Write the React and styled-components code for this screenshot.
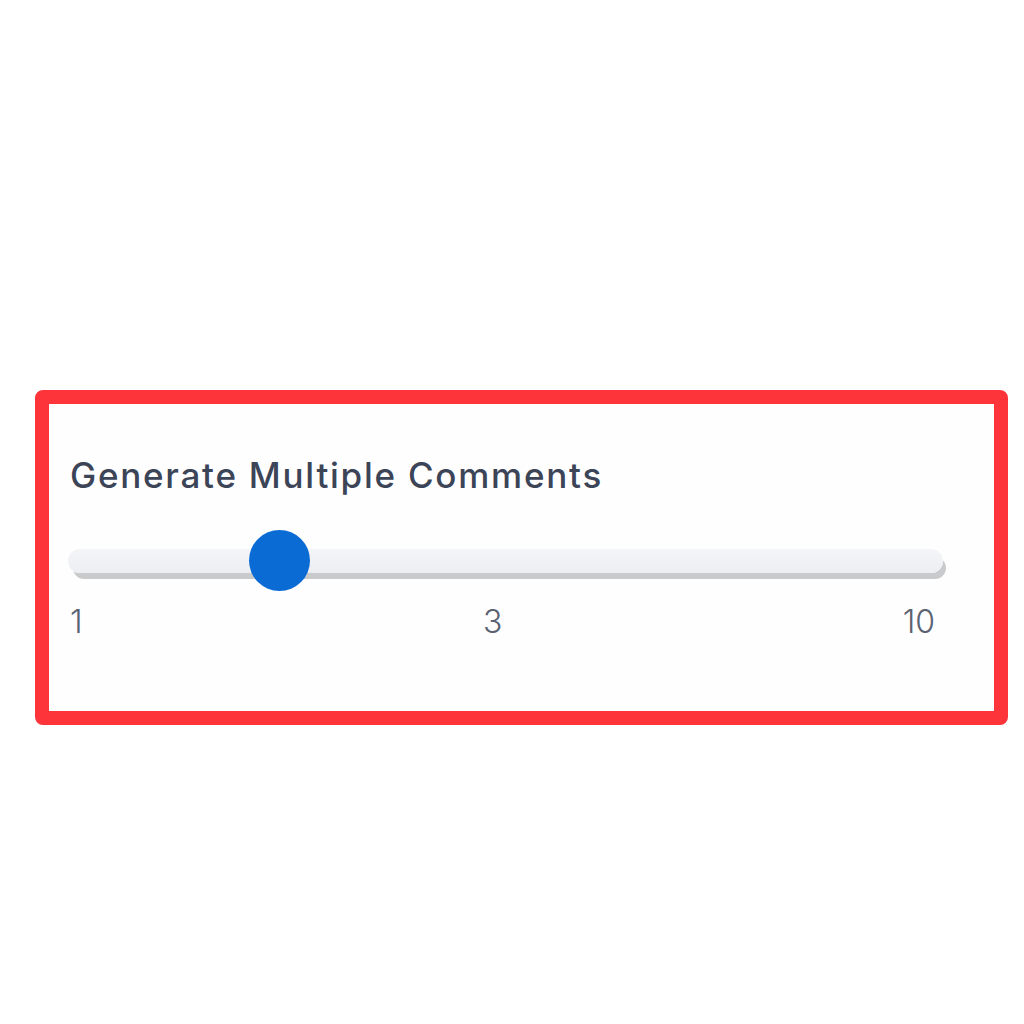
import React, { useState } from "react";
import styled, { createGlobalStyle } from "styled-components";

const GlobalStyle = createGlobalStyle`
  body {
    margin: 0;
    background: #ffffff;
    font-family: Inter, "Noto Sans", sans-serif;
  }
`;

const Frame = styled.section`
  box-sizing: border-box;
  width: 973px;
  height: 335px;
  margin: 390px 0 0 35px;
  border: 14px solid #fd343a;
  border-radius: 8px;
  padding: 50px 51px 0 19px;
  background: #fefefe;
`;

const Title = styled.h2`
  margin: 0 0 34px 2px;
  font-size: 35px;
  line-height: 1.2;
  font-weight: 500;
  letter-spacing: 1.75px;
  color: #3c4458;
`;

const Range = styled.input`
  display: block;
  width: 100%;
  height: 61px;
  margin: 0;
  background: transparent;
  -webkit-appearance: none;
  appearance: none;

  &::-webkit-slider-runnable-track {
    height: 24px;
    border-radius: 12px;
    background: linear-gradient(#f4f5f7, #eceef2);
    box-shadow: 4px 7px 0 -1px #c9cacb;
  }

  &::-webkit-slider-thumb {
    -webkit-appearance: none;
    width: 61px;
    height: 61px;
    margin-top: -19px;
    border: none;
    border-radius: 50%;
    background: #0b6bd5;
  }
`;

const Labels = styled.div`
  display: flex;
  justify-content: space-between;
  margin: 12px 8px 0 2px;
  font-size: 32px;
  line-height: 1.2;
  font-weight: 300;
  color: #5a6272;
`;

const App = () => {
  const [count, setCount] = useState(3);

  return (
    <>
      <GlobalStyle />
      <Frame>
        <Title>Generate Multiple Comments</Title>
        <Range
          type="range"
          min={1}
          max={10}
          value={count}
          onChange={(e) => setCount(Number(e.target.value))}
        />
        <Labels>
          <span>1</span>
          <span>{count}</span>
          <span>10</span>
        </Labels>
      </Frame>
    </>
  );
};

export default App;
